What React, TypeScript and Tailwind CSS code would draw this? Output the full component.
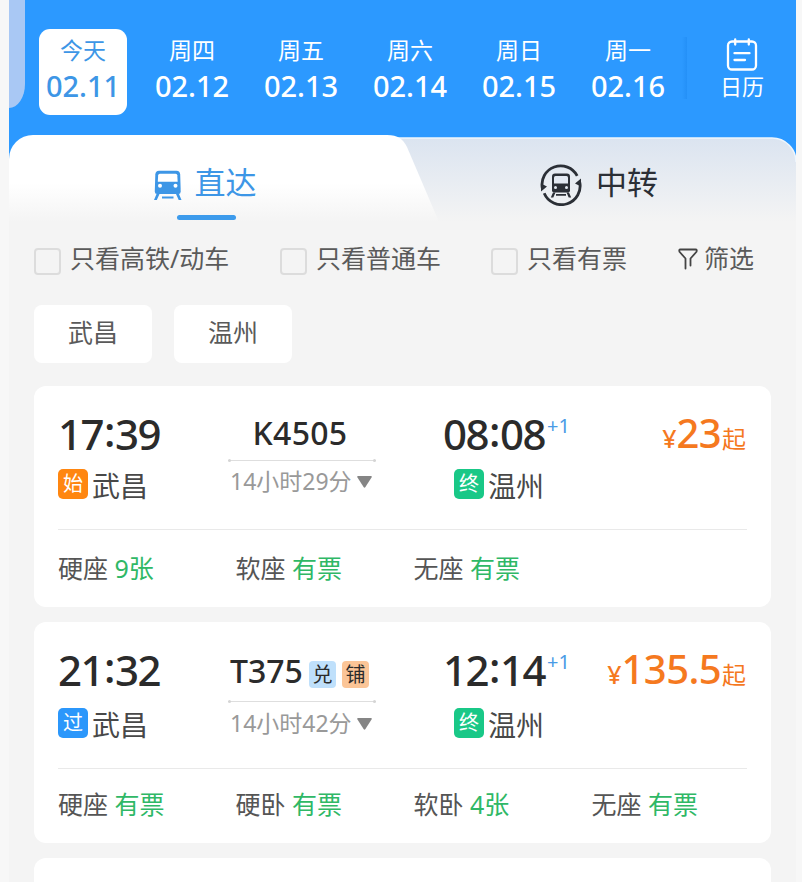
import { type ReactNode } from 'react';
import clsx from 'clsx';

interface Seat {
  name: string;
  left: string;
}

interface Train {
  id: string;
  depart: string;
  arrive: string;
  from: string;
  to: string;
  fromTag: string;
  fromTagColor: string;
  duration: string;
  price: string;
  badges: { text: string; color: string }[];
  seats: Seat[];
}

const days = [
  { week: '今天', date: '02.11' },
  { week: '周四', date: '02.12' },
  { week: '周五', date: '02.13' },
  { week: '周六', date: '02.14' },
  { week: '周日', date: '02.15' },
  { week: '周一', date: '02.16' },
];

const trains: Train[] = [
  {
    id: 'K4505',
    depart: '17:39',
    arrive: '08:08',
    from: '武昌',
    to: '温州',
    fromTag: '始',
    fromTagColor: 'bg-[#ff8610]',
    duration: '14小时29分',
    price: '23',
    badges: [],
    seats: [
      { name: '硬座', left: '9张' },
      { name: '软座', left: '有票' },
      { name: '无座', left: '有票' },
    ],
  },
  {
    id: 'T375',
    depart: '21:32',
    arrive: '12:14',
    from: '武昌',
    to: '温州',
    fromTag: '过',
    fromTagColor: 'bg-[#2b97fb]',
    duration: '14小时42分',
    price: '135.5',
    badges: [
      { text: '兑', color: 'bg-[#bfe0fb]' },
      { text: '铺', color: 'bg-[#fbc597]' },
    ],
    seats: [
      { name: '硬座', left: '有票' },
      { name: '硬卧', left: '有票' },
      { name: '软卧', left: '4张' },
      { name: '无座', left: '有票' },
    ],
  },
];

function TrainIcon() {
  return (
    <svg viewBox="0 0 28 31" className="h-[31px] w-7" fill="currentColor">
      <path d="M5 .7H22.500Q26 .7 26.200 4.500L26.700 21.500Q26.700 24 24.500 24H3Q.8 24 .8 21.500L1.300 4.500Q1.500 .7 5 .7Z" />
      <path d="M5.800 3.700H21.700Q23.200 3.700 23.300 5.200L23.700 11.700H3.800L4.200 5.200Q4.300 3.700 5.800 3.700Z" fill="#fff" />
      <circle cx="6" cy="15.700" r="2" fill="#fff" />
      <circle cx="21.500" cy="15.700" r="2" fill="#fff" />
      <path d="M2.500 24H5.500L2.800 30H0ZM22 24H25L27.500 30H24.700ZM8 26.500H19.500V28.500H8Z" />
    </svg>
  );
}

function TransferIcon() {
  return (
    <svg viewBox="0 0 42 42" className="h-[42px] w-[42px]" fill="none" stroke="#2b2f36">
      <path d="M2.400 24.500A18.700 18.700 0 0 1 37.200 11.800" strokeWidth="2.800" />
      <path d="M39.600 17.500A18.700 18.700 0 0 1 4.200 29.200" strokeWidth="2.800" />
      <path d="M1 19.500V27.500L7 22.500ZM41 22.500V14.500L35 19.500Z" fill="#2b2f36" stroke="none" />
      <g fill="#2b2f36" stroke="none">
        <path d="M15 9.500H27Q30 9.500 30 12.500V26.500Q30 28.500 28 28.500H14Q12 28.500 12 26.500V12.500Q12 9.500 15 9.500Z" />
        <path d="M15.500 12H26.500Q28 12 28 13.500V19.500H14V13.500Q14 12 15.500 12Z" fill="#e3e9f2" />
        <circle cx="15.500" cy="23.500" r="1.500" fill="#e3e9f2" />
        <circle cx="26.500" cy="23.500" r="1.500" fill="#e3e9f2" />
        <path d="M13 28.500H15.500L13.300 33.500H10.800ZM26.500 28.500H29L31.200 33.500H28.700ZM16 30H26V31.800H16Z" />
      </g>
    </svg>
  );
}

function CalendarIcon() {
  return (
    <svg viewBox="0 0 32 34" className="h-[34px] w-8" fill="none" stroke="white" strokeWidth="2.300" strokeLinecap="round">
      <rect x="2" y="3.500" width="28" height="28" rx="4" />
      <path d="M9.200 1.500v5M22.800 1.500v5M8.500 15.200h15M8.500 22h10.500" />
    </svg>
  );
}

function FilterIcon() {
  return (
    <svg viewBox="0 0 20 22" className="h-[22px] w-5" fill="none" stroke="#444" strokeWidth="1.800" strokeLinejoin="round" strokeLinecap="round">
      <path d="M7.500 20.500V10.500L1.700 4Q.5 1.500 2.500 1.500H17.500Q19.500 1.500 18.300 4L12.500 10.500V17.500" />
    </svg>
  );
}

function Check({ children, className }: { children: ReactNode; className: string }) {
  return (
    <label className={clsx('flex shrink-0 items-center', className)}>
      <span className="mt-[5px] h-[27px] w-[27px] rounded-[4px] border-2 border-[#dcdcdc]" />
      <span className="ml-[9px] whitespace-nowrap">{children}</span>
    </label>
  );
}

function Tag({ children, className }: { children: ReactNode; className: string }) {
  return (
    <span className={clsx('flex h-[30px] w-[30px] items-center justify-center rounded-[5px] text-[20px] leading-none text-white', className)}>
      {children}
    </span>
  );
}

function Time({ value }: { value: string }) {
  const [hours, minutes] = value.split(':');
  return (
    <span className="text-[42px] leading-[44px] font-medium tracking-[-1.500px] text-[#2b2b2b]">
      {hours}
      <span className="relative -top-[3px] mx-[1px]">:</span>
      {minutes}
    </span>
  );
}

function TrainCard({ train }: { train: Train }) {
  const tagged = train.badges.length > 0;
  return (
    <section className="h-[221px] rounded-xl bg-white px-6">
      <div className={clsx('flex border-b border-[#e9e9e9]', tagged ? 'h-[147px]' : 'h-[144px]')}>
        <div className="w-[170px] pt-[26px]">
          <div className="flex h-[44px]">
            <Time value={train.depart} />
          </div>
          <div className={clsx('flex items-start text-[28px] leading-[30px] text-[#484848]', tagged ? 'mt-[16px]' : 'mt-[13px]')}>
            <Tag className={train.fromTagColor}>{train.fromTag}</Tag>
            <span className="mt-[2px] ml-[4px]">{train.from}</span>
          </div>
        </div>

        <div className="flex w-[148px] flex-col pt-[27px]">
          <div className={clsx('flex h-[40px] items-center text-[32px] leading-none font-medium text-[#2b2b2b]', tagged ? 'pt-[3px] pl-[2px]' : 'justify-center pr-1 tracking-[.3px]')}>
            <span>{train.id}</span>
            {train.badges.map((badge) => (
              <span key={badge.text} className={clsx('mt-[8px] ml-[6px] flex h-[27px] w-[27px] items-center justify-center rounded-[4px] text-[20px] font-normal', badge.color)}>
                {badge.text}
              </span>
            ))}
          </div>
          <div className={clsx('flex items-center justify-between border-t border-[#dedede]', tagged ? 'mt-[12px]' : 'mt-[7px]')}>
            <i className="-mt-[2px] h-[3px] w-[3px] rounded-full bg-[#d5d5d5]" />
            <i className="-mt-[2px] h-[3px] w-[3px] rounded-full bg-[#d5d5d5]" />
          </div>
          <div className={clsx('flex items-center pl-[2px] text-[23px] whitespace-nowrap text-[#999]', tagged ? 'leading-[41px]' : 'leading-[39px]')}>
            {train.duration}
            <svg viewBox="0 0 16 13" className="mt-px ml-[5px] h-[12px] w-[15px]" fill="#858585">
              <path d="M1 0h14q1.500 0 .6 1.500L9 12q-1 1.200-2 0L.4 1.500Q-.5 0 1 0Z" />
            </svg>
          </div>
        </div>

        <div className="ml-[67px] w-[140px] pt-[26px]">
          <div className="flex h-[44px]">
            <Time value={train.arrive} />
            <sup className="top-0 mt-[2px] ml-[2px] text-[20px] leading-[24px] text-[#4a9be6]">+1</sup>
          </div>
          <div className={clsx('ml-[11px] flex items-start text-[28px] leading-[30px] text-[#484848]', tagged ? 'mt-[16px]' : 'mt-[13px]')}>
            <Tag className="bg-[#19c887]">终</Tag>
            <span className="mt-[2px] ml-[4px]">{train.to}</span>
          </div>
        </div>

        <div className="flex flex-1 items-baseline justify-end pt-[25px] pr-[1px] leading-[44px] font-medium whitespace-nowrap text-[#f5791f]">
          <span className="text-[25px]">¥</span>
          <span className="mr-[1px] text-[40px] tracking-[-.600px]">{train.price}</span>
          <span className="text-[24px] font-normal">起</span>
        </div>
      </div>

      <div className={clsx('grid grid-cols-[177.5px_178px_178px_1fr] text-[25px] whitespace-nowrap text-[#555]', tagged ? 'leading-[70px]' : 'leading-[76px]')}>
        {train.seats.map((seat) => (
          <div key={seat.name}>
            {seat.name} <span className="text-[#2fb866]">{seat.left}</span>
          </div>
        ))}
      </div>
    </section>
  );
}

export default function App() {
  return (
    <div className="h-[882px] w-[802px] overflow-hidden bg-[#f7f7f7] pr-[6px] pl-[9px] font-['Noto_Sans','Noto_Sans_CJK_SC',sans-serif]">
      <div className="h-[882px] bg-[#f4f4f4]">
        {/* Date picker */}
        <header className="relative flex h-[160px] bg-[#2c99ff] pt-[29px]">
          <div className="absolute top-0 left-0 h-[108px] w-[16px] rounded-br-[16px_24px] bg-[#a9c8f4]" />
          <div className="ml-[19px] flex">
            {days.map((day, i) => (
              <div key={day.date} className="w-[109px] px-[11px]">
                <div
                  className={clsx(
                    'flex h-[86px] w-[88px] flex-col items-center rounded-[11px] pt-[5px]',
                    i === 0 ? 'bg-white text-[#3d96e6]' : 'text-white'
                  )}
                >
                  <span className="text-[23px] leading-[32px]">{day.week}</span>
                  <span className="text-[29px] leading-[40px] font-medium">{day.date}</span>
                </div>
              </div>
            ))}
          </div>
          <div className="mt-[8px] h-[62px] w-[5px] bg-linear-to-r from-[#2c99ff] to-[#2490f7]" />
          <div className="ml-[25px] flex w-[60px] flex-col items-center pt-[9px] text-white">
            <CalendarIcon />
            <span className="text-[22px] leading-[29px]">日历</span>
          </div>
        </header>

        {/* Direct / transfer tabs */}
        <div className="relative -mt-[25px] flex h-[87px]">
          <svg viewBox="0 0 787 87" className="absolute inset-0 h-[87px] w-[787px]">
            <defs>
              <linearGradient id="tab" x1="0" y1="0" x2="0" y2="1">
                <stop offset="0" stopColor="#dbe4f0" />
                <stop offset="1" stopColor="#f4f4f4" />
              </linearGradient>
              <linearGradient id="active" x1="0" y1="0" x2="0" y2="1">
                <stop offset=".55" stopColor="#fff" />
                <stop offset="1" stopColor="#f4f4f4" />
              </linearGradient>
            </defs>
            <path d="M0 24H787V87H0Z" fill="#f4f4f4" />
            <path d="M370 3H763a24 24 0 0 1 24 24V87H370Z" fill="url(#tab)" />
            <path d="M370 3H763a24 24 0 0 1 24 24" fill="none" stroke="#eef6fd" strokeWidth="1.500" />
            <path d="M0 24A24 24 0 0 1 24 0H378C389 0 394 4 398 12L430 87H0Z" fill="url(#active)" />
          </svg>
          <div className="relative flex w-[394px] flex-col items-center">
            <div className="mt-[23px] flex h-[48px] items-center pr-[2px] text-[31px] leading-[48px] text-[#3d96e6]">
              <span className="mt-[6px] mr-[13px]">
                <TrainIcon />
              </span>
              直达
            </div>
            <div className="mt-[9px] h-[5px] w-[59px] rounded-full bg-[#3d9bec]" />
          </div>
          <div className="relative flex flex-1 justify-center">
            <div className="mt-[23px] flex h-[48px] items-center pr-[1px] text-[31px] leading-[48px] text-[#2b2f36]">
              <span className="mt-[6px] mr-[14px]">
                <TransferIcon />
              </span>
              中转
            </div>
          </div>
        </div>

        {/* Filters */}
        <div className="flex h-[73px] items-center pl-[25px] text-[25px] text-[#5a5a5a]">
          <Check className="w-[246px]">只看高铁/动车</Check>
          <Check className="w-[211px]">只看普通车</Check>
          <Check className="w-[187px]">只看有票</Check>
          <div className="flex items-center gap-[6px] whitespace-nowrap">
            <FilterIcon />
            筛选
          </div>
        </div>

        <div className="flex gap-[22px] px-[25px] pt-[10px] text-[25px] text-[#5a5a5a]">
          {['武昌', '温州'].map((city) => (
            <div key={city} className="h-[58px] w-[118px] rounded-lg bg-white text-center leading-[54px]">
              {city}
            </div>
          ))}
        </div>

        {/* Train list */}
        <main className="mt-[23px] flex flex-col gap-[15px] px-[25px]">
          {trains.map((train) => (
            <TrainCard key={train.id} train={train} />
          ))}
          <section className="h-[40px] rounded-t-xl bg-white" />
        </main>
      </div>
    </div>
  );
}
